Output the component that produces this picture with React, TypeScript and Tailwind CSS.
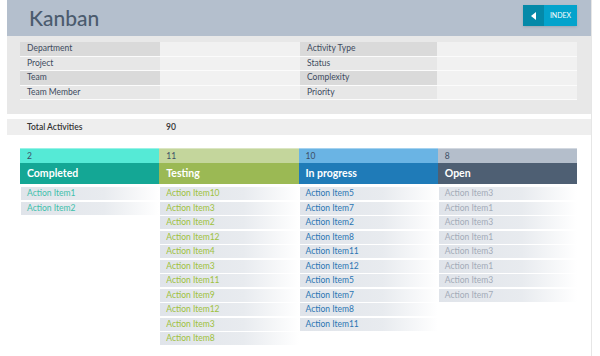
import React from "react";

interface Lane {
  title: string;
  countBg: string;
  titleBg: string;
  itemText: string;
  items: string[];
}

const lanes: Lane[] = [
  {
    title: "Completed",
    countBg: "bg-[#55ead6]",
    titleBg: "bg-[#14a795]",
    itemText: "text-[#3ec0ab]",
    items: ["Action Item1", "Action Item2"],
  },
  {
    title: "Testing",
    countBg: "bg-[#c4d69c]",
    titleBg: "bg-[#9bb954]",
    itemText: "text-[#9dc13c]",
    items: [
      "Action Item10",
      "Action Item3",
      "Action Item2",
      "Action Item12",
      "Action Item4",
      "Action Item3",
      "Action Item11",
      "Action Item9",
      "Action Item12",
      "Action Item3",
      "Action Item8",
    ],
  },
  {
    title: "In progress",
    countBg: "bg-[#6ab4e4]",
    titleBg: "bg-[#1f7bb8]",
    itemText: "text-[#2b75b3]",
    items: [
      "Action Item5",
      "Action Item7",
      "Action Item2",
      "Action Item8",
      "Action Item11",
      "Action Item12",
      "Action Item5",
      "Action Item7",
      "Action Item8",
      "Action Item11",
    ],
  },
  {
    title: "Open",
    countBg: "bg-[#b4becb]",
    titleBg: "bg-[#4e5f73]",
    itemText: "text-[#a3abb8]",
    items: [
      "Action Item3",
      "Action Item1",
      "Action Item3",
      "Action Item1",
      "Action Item3",
      "Action Item1",
      "Action Item3",
      "Action Item7",
    ],
  },
];

const leftFilters = ["Department", "Project", "Team", "Team Member"];
const rightFilters = ["Activity Type", "Status", "Complexity", "Priority"];

const FilterColumn: React.FC<{ labels: string[]; labelWidth: string }> = ({ labels, labelWidth }) => (
  <div className="flex flex-col">
    {labels.map((label, i) => (
      <div key={label} className="flex h-[14.5px] border-b border-[#fbfbfb]">
        <div
          className={`${labelWidth} flex items-center pl-[7px] text-[8.5px] text-[#3d4a5e] ${
            i % 2 === 0 ? "bg-[#dadada]" : "bg-[#e7e7e7]"
          }`}
        >
          {label}
        </div>
        <div className="w-[140px] bg-[#f1f1f1]" />
      </div>
    ))}
  </div>
);

export default function App() {
  return (
    <div className="w-[600px] h-[356px] overflow-hidden bg-white" style={{ fontFamily: "Lato, 'Open Sans', sans-serif" }}>
      <div className="ml-[7px] w-[585px] h-[356px] border-r border-[#e6e6e6]">
        {/* Header */}
        <div className="h-[36px] bg-[#b4bfcd] flex items-start justify-between pl-[22px] pr-[14px]">
          <h1 className="mt-[6px] text-[21px] leading-[24px] font-medium text-[#4b5b6e]">Kanban</h1>
          <button className="mt-[5px] flex h-[21px] w-[54px] shadow-sm">
            <span className="flex w-[21px] items-center justify-center bg-[#0589a8]">
              <svg width="6" height="8" viewBox="0 0 6 8">
                <polygon points="5,0 5,8 0,4" fill="white" />
              </svg>
            </span>
            <span className="flex flex-1 items-center justify-center bg-[#04a3cc] text-[7px] text-white">INDEX</span>
          </button>
        </div>

        {/* Filters */}
        <div className="h-[78px] bg-[#e8e8e8] pl-[13px] pt-[6px] flex">
          <FilterColumn labels={leftFilters} labelWidth="w-[140px]" />
          <FilterColumn labels={rightFilters} labelWidth="w-[137px]" />
        </div>

        {/* Totals */}
        <div className="mt-[5px] h-[16px] bg-[#eeeeee] flex items-center text-[8.5px] font-semibold text-[#333]">
          <span className="w-[159px] pl-[20px]">Total Activities</span>
          <span>90</span>
        </div>

        {/* Board */}
        <div className="mt-[13px] ml-[13px] w-[557px] grid grid-cols-4 items-start">
          {lanes.map((lane) => (
            <div key={lane.title} className="flex flex-col">
              <div className={`${lane.countBg} h-[15px] flex items-center pl-[7px] text-[8.5px] text-[#3d4f66] border-t border-white/40`}>
                {lane.items.length}
              </div>
              <div className={`${lane.titleBg} h-[21px] flex items-center pl-[7px] text-[10.5px] font-bold text-white`}>
                {lane.title}
              </div>
              <ul className="mt-[3px] flex flex-col gap-[1.5px] pl-[1px]">
                {lane.items.map((item, i) => (
                  <li
                    key={i}
                    className={`h-[13px] flex items-center pl-[6px] text-[8.5px] ${lane.itemText} bg-gradient-to-r from-[#e0e4ea] via-[#e8ebef] via-60% to-white`}
                  >
                    {item}
                  </li>
                ))}
              </ul>
            </div>
          ))}
        </div>
      </div>
    </div>
  );
}
